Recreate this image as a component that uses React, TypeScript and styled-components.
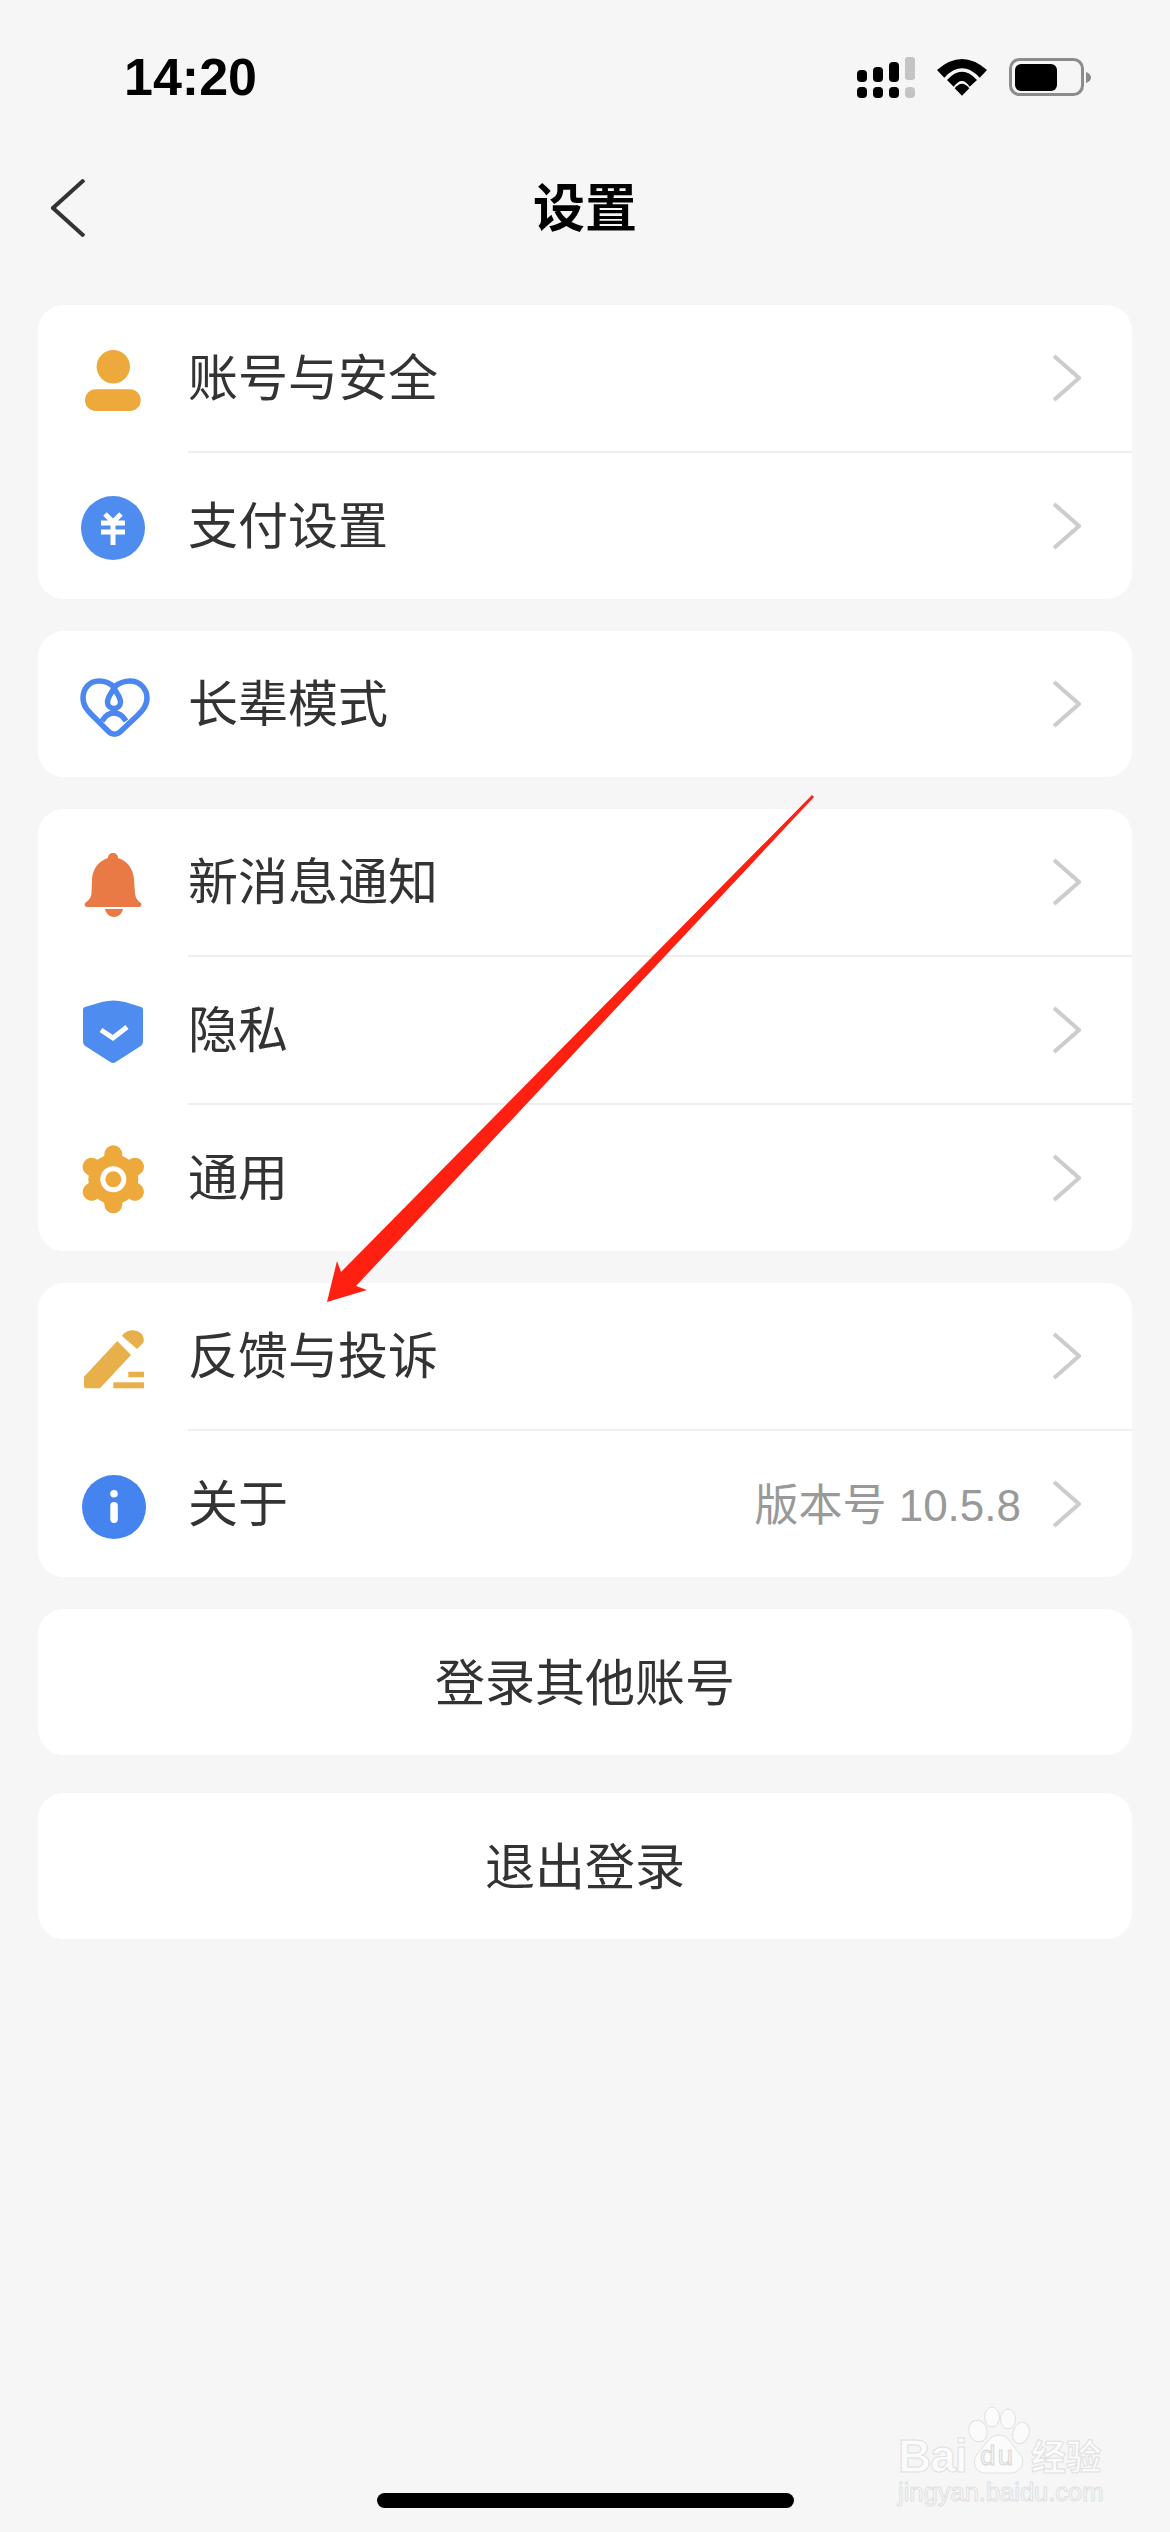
import React from "react";
import styled, { createGlobalStyle } from "styled-components";

const GlobalStyle = createGlobalStyle`
  html, body { margin: 0; padding: 0; background: #f6f6f6; }
  * { box-sizing: border-box; }
`;

const CJK = `"Noto Sans CJK SC", "Liberation Sans", sans-serif`;
const LATIN_CJK = `"Liberation Sans", "Noto Sans CJK SC", sans-serif`;

const Page = styled.div`
  position: relative;
  width: 1170px;
  height: 2532px;
  overflow: hidden;
  background: #f6f6f6;
  font-family: ${CJK};
`;

const StatusBar = styled.div`
  height: 110px;
  padding: 44px 79px 0 124px;
  display: flex;
  align-items: center;
  justify-content: space-between;
`;

const Time = styled.div`
  font-family: "Liberation Sans", sans-serif;
  font-weight: 700;
  font-size: 52px;
  line-height: 52px;
  color: #000;
`;

const StatusIcons = styled.div`
  display: flex;
  align-items: center;
  gap: 22px;
`;

const Nav = styled.div`
  height: 195px;
  padding: 0 51px;
  display: grid;
  grid-template-columns: 1fr auto 1fr;
  align-items: center;
`;

const BackIcon = styled.svg`
  display: block;
`;

const Title = styled.div`
  font-weight: 700;
  font-size: 52px;
  line-height: 60px;
  padding-bottom: 6px;
  color: #000;
`;

const Cards = styled.div`
  padding: 0 38px;
  display: flex;
  flex-direction: column;
  gap: 32px;
`;

const Card = styled.div<{ $spaced?: boolean }>`
  background: #fff;
  border-radius: 26px;
  overflow: hidden;
  margin-top: ${(p) => (p.$spaced ? "6px" : "0")};
`;

const Row = styled.div`
  height: 146px;
  padding: 0 51px 0 40px;
  display: flex;
  align-items: center;
`;

const IconBox = styled.div`
  width: 70px;
  height: 70px;
  flex: none;
  margin-right: 40px;
`;

const Label = styled.div`
  flex: 1;
  font-size: 50px;
  line-height: 60px;
  padding-bottom: 8px;
  color: #333;
`;

const Value = styled.div`
  font-family: ${LATIN_CJK};
  font-size: 44px;
  line-height: 60px;
  padding-top: 4px;
  color: #999;
  margin-right: 32px;
`;

const Divider = styled.div`
  height: 2px;
  margin-left: 150px;
  background: #efefef;
`;

const ActionButton = styled.div`
  height: 146px;
  padding-bottom: 6px;
  display: flex;
  align-items: center;
  justify-content: center;
  font-size: 50px;
  color: #333;
  line-height: 60px;
`;

const HomeIndicator = styled.div`
  position: absolute;
  left: 377px;
  top: 2493px;
  width: 417px;
  height: 15px;
  border-radius: 8px;
  background: #000;
`;

const ArrowOverlay = styled.svg`
  position: absolute;
  left: 320px;
  top: 790px;
`;

const Watermark = styled.div`
  position: absolute;
  left: 896px;
  top: 2405px;
  width: 214px;
  color: #fbfbfb;
  -webkit-text-stroke: 1px #e0e0e0;
  font-family: "Liberation Sans", sans-serif;
`;

const LogoLine = styled.div`
  display: flex;
  align-items: flex-end;
  height: 70px;
`;

const LogoBai = styled.div`
  font-weight: 700;
  font-size: 46px;
  line-height: 50px;
  letter-spacing: -1px;
  width: 71px;
  padding-left: 2px;
  margin-bottom: -6px;
`;

const PawBox = styled.div`
  position: relative;
  width: 64px;
  height: 70px;
  flex: none;
`;

const PawDu = styled.div`
  position: absolute;
  left: 13px;
  bottom: 5px;
  font-size: 28px;
  line-height: 28px;
  letter-spacing: 2px;
  color: #f6f6f6;
  -webkit-text-stroke: 1px #d8d8d8;
`;

const LogoCn = styled.div`
  font-family: ${CJK};
  font-weight: 700;
  font-size: 35px;
  line-height: 40px;
`;

const LogoUrl = styled.div`
  font-size: 25.5px;
  line-height: 28px;
  margin-top: 3px;
  padding-left: 2px;
  white-space: nowrap;
`;

const ChevronIcon = styled.svg`
  display: block;
  flex: none;
`;

const Chevron = () => (
  <ChevronIcon width="28" height="48" viewBox="0 0 28 48">
    <path d="M1 2 L26 24 L1 46" fill="none" stroke="#cccccc" strokeWidth="4" />
  </ChevronIcon>
);

const Icon = ({ children }: { children: React.ReactNode }) => (
  <IconBox>
    <svg width="70" height="70" viewBox="0 0 70 70" style={{ display: "block", overflow: "visible" }}>
      {children}
    </svg>
  </IconBox>
);

const PersonIcon = () => (
  <Icon>
    <circle cx="35.3" cy="23.7" r="16.7" fill="#EDA93B" />
    <rect x="7" y="46.3" width="55.7" height="21.7" rx="10.8" fill="#EDA93B" />
  </Icon>
);

const YuanIcon = () => (
  <Icon>
    <circle cx="35" cy="37" r="32" fill="#4F8CF0" />
    <path d="M27 23 L35 31 L43 23 M23 32 H47 M23 41 H47 M35 31 V54" fill="none" stroke="#fff" strokeWidth="5" />
  </Icon>
);

const HeartIcon = () => (
  <Icon>
    <g fill="none" stroke="#4B87EE" strokeWidth="5.5">
      <path d="M36 18 C32 14 27 12 21 12 C11 12 5 20 5 29 C5 37 10 42 14 46 L31 63 C34 66 39 66 42 63 L60 46 C64 42 69 37 69 29 C69 20 62 12 52 12 C46 12 41 14 36 18 Z" />
      <path d="M36 18 C37 23 42.5 27 42.5 33 A6.5 6.5 0 1 1 29.5 33 C29.5 27 35 23 36 18 Z" />
      <path d="M24 52 C27 47 31 44 36 44 C41 44 45 47 48 52" />
    </g>
  </Icon>
);

const BellIcon = () => (
  <Icon>
    <path
      d="M35 6 C38 6 40 8 40 11 C49 14 55 21 56 32 L57 46 C57.5 51 59 53 63 56 C64 58 63 60 61 60 L9 60 C7 60 6 58 7 56 C11 53 13 51 13.5 46 L14 32 C15 21 21 14 30 11 C30 8 32 6 35 6 Z"
      fill="#E97A45"
    />
    <path d="M27 62 H45 C44 67 40 70 36 70 C32 70 28 67 27 62 Z" fill="#E97A45" />
  </Icon>
);

const ShieldIcon = () => (
  <Icon>
    <path
      d="M7 12 L24 7 Q35 4 47 7 L63 12 C65 12.5 65 14 65 16 L65 46 C65 49 64 50 62 51.5 L37 67.5 C36 68 34 68 33 67.5 L8 51.5 C6 50 5 49 5 46 L5 16 C5 14 5 12.5 7 12 Z"
      fill="#4F8CF0"
    />
    <path d="M23 35 L35 43 L49 32" fill="none" stroke="#fff" strokeWidth="5" />
  </Icon>
);

const GearIcon = () => (
  <Icon>
    <circle cx="35.3" cy="36.3" r="25" fill="#EDA93B" />
    <g stroke="#EDA93B" strokeWidth="18" strokeLinecap="round">
      <path d="M35.3 11.3 V61.3" />
      <path d="M35.3 11.3 V61.3" transform="rotate(60 35.3 36.3)" />
      <path d="M35.3 11.3 V61.3" transform="rotate(120 35.3 36.3)" />
    </g>
    <circle cx="35.3" cy="36.3" r="13" fill="#fff" />
    <circle cx="35.3" cy="36.3" r="8" fill="#EDA93B" />
  </Icon>
);

const PencilIcon = () => (
  <Icon>
    <path d="M6 55.7 L39.3 20 L53 34 L22 67.3 L8 67.3 Q6 67.3 6 65 Z" fill="#E8B04A" />
    <path d="M44 15 C47 10 54 8 59 10 C65 12 67 18 65 22 L59 28 Z" fill="#E8B04A" />
    <rect x="50.3" y="50.7" width="15.7" height="5.6" fill="#E8B04A" />
    <rect x="35.3" y="61.3" width="30.7" height="6" fill="#E8B04A" />
  </Icon>
);

const InfoIcon = () => (
  <Icon>
    <circle cx="36" cy="38" r="32" fill="#4583EE" />
    <circle cx="36" cy="24.7" r="3.8" fill="#fff" />
    <rect x="32.3" y="33" width="7.5" height="21" rx="3.7" fill="#fff" />
  </Icon>
);

const SignalIcon = () => (
  <svg width="58" height="41" viewBox="0 0 58 41" style={{ display: "block" }}>
    <g fill="#000">
      <rect x="0" y="13" width="10" height="12" rx="4" />
      <rect x="16" y="10" width="10" height="15" rx="4" />
      <rect x="32" y="5" width="10" height="20" rx="4" />
      <rect x="0" y="30" width="10" height="11" rx="4" />
      <rect x="16" y="30" width="10" height="11" rx="4" />
      <rect x="32" y="30" width="10" height="11" rx="4" />
    </g>
    <g fill="#c4c4c4">
      <rect x="48" y="0" width="10" height="23" rx="3" />
      <rect x="48" y="30" width="10" height="11" rx="4" />
    </g>
  </svg>
);

const WifiIcon = () => (
  <svg width="50" height="37" viewBox="0 0 50 37" style={{ display: "block" }}>
    <g fill="#000">
      <path d="M0 11 Q25 -11 50 11 L42.7 18.7 Q25 0 7.3 18.7 Z" />
      <path d="M10 21 Q25 4.4 40 21 L32.7 27.7 Q25 16.3 16.7 27.7 Z" />
      <path d="M17.7 29.3 Q25 20 32.3 29.3 L25 36.7 Z" />
    </g>
  </svg>
);

const BatteryIcon = () => (
  <svg width="82" height="39" viewBox="0 0 82 39" style={{ display: "block" }}>
    <rect x="1.5" y="1.5" width="72" height="35" rx="9" fill="none" stroke="#8c8c8c" strokeWidth="3" />
    <rect x="6" y="6" width="42" height="27" rx="6" fill="#000" />
    <path d="M77 14 Q82 16 82 19.5 Q82 23 77 25 Z" fill="#8c8c8c" />
  </svg>
);

type Item = { icon: React.ReactNode; label: string; value?: string };

const groups: Item[][] = [
  [
    { icon: <PersonIcon />, label: "账号与安全" },
    { icon: <YuanIcon />, label: "支付设置" },
  ],
  [{ icon: <HeartIcon />, label: "长辈模式" }],
  [
    { icon: <BellIcon />, label: "新消息通知" },
    { icon: <ShieldIcon />, label: "隐私" },
    { icon: <GearIcon />, label: "通用" },
  ],
  [
    { icon: <PencilIcon />, label: "反馈与投诉" },
    { icon: <InfoIcon />, label: "关于", value: "版本号 10.5.8" },
  ],
];

export default function App() {
  return (
    <Page>
      <GlobalStyle />
      <StatusBar>
        <Time>14:20</Time>
        <StatusIcons>
          <SignalIcon />
          <WifiIcon />
          <BatteryIcon />
        </StatusIcons>
      </StatusBar>
      <Nav>
        <BackIcon width="34" height="58" viewBox="0 0 34 58">
          <path d="M33 1 L2 29 L33 57" fill="none" stroke="#333" strokeWidth="4" />
        </BackIcon>
        <Title>设置</Title>
        <div />
      </Nav>
      <Cards>
        {groups.map((items, g) => (
          <Card key={g}>
            {items.map((item, i) => (
              <React.Fragment key={item.label}>
                {i > 0 && <Divider />}
                <Row>
                  {item.icon}
                  <Label>{item.label}</Label>
                  {item.value && <Value>{item.value}</Value>}
                  <Chevron />
                </Row>
              </React.Fragment>
            ))}
          </Card>
        ))}
        <Card>
          <ActionButton>登录其他账号</ActionButton>
        </Card>
        <Card $spaced>
          <ActionButton>退出登录</ActionButton>
        </Card>
      </Cards>
      <ArrowOverlay width="500" height="520" viewBox="320 790 500 520">
        <polygon
          points="812,795 814,797 356,1286 367,1290 327,1302 337,1261 341,1272"
          fill="#FF2012"
        />
      </ArrowOverlay>
      <Watermark>
        <LogoLine>
          <LogoBai>Bai</LogoBai>
          <PawBox>
            <svg width="64" height="70" viewBox="0 0 64 70" style={{ display: "block" }}>
              <g fill="#fbfbfb" stroke="#e0e0e0" strokeWidth="1">
                <ellipse cx="11" cy="26" rx="9" ry="11" transform="rotate(-20 11 26)" />
                <ellipse cx="25" cy="12" rx="7.5" ry="10" />
                <ellipse cx="41" cy="14" rx="7.5" ry="10" />
                <ellipse cx="54" cy="28" rx="8" ry="11" transform="rotate(20 54 28)" />
                <path d="M32 30 C42 30 44 40 52 48 C60 56 54 68 44 68 L18 68 C8 68 4 56 11 48 C19 40 22 30 32 30 Z" />
              </g>
            </svg>
            <PawDu>du</PawDu>
          </PawBox>
          <LogoCn>经验</LogoCn>
        </LogoLine>
        <LogoUrl>jingyan.baidu.com</LogoUrl>
      </Watermark>
      <HomeIndicator />
    </Page>
  );
}
